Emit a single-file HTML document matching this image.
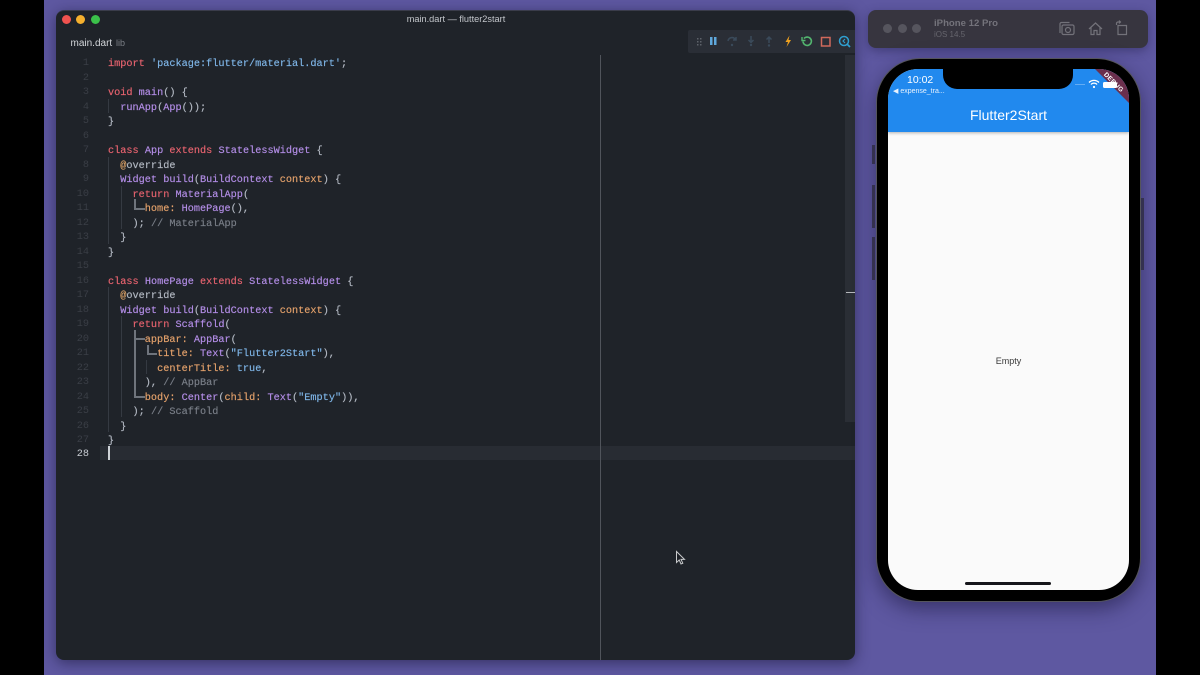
<!DOCTYPE html>
<html><head><meta charset="utf-8"><style>
*{box-sizing:border-box}
html,body{margin:0;padding:0;width:1200px;height:675px;overflow:hidden;background:#000}
body{position:relative;font-family:"Liberation Sans",sans-serif}
.abs{position:absolute}
#bg{left:44px;top:0;width:1112px;height:675px;background:#5e58a1}
#win{left:56px;top:10px;width:799px;height:650px;background:#1f2329;border-radius:8px;box-shadow:0 3px 14px rgba(20,18,50,.55);overflow:hidden;border:1px solid #3a3c4a;border-width:1px 0 0 0}
.l{position:absolute;left:108px;margin-top:2px;white-space:pre;font:10.22px/14px "Liberation Mono",monospace;color:#b4bac4;height:14px;-webkit-text-stroke:.15px currentColor}
.n{position:absolute;left:56px;margin-top:2px;width:33px;text-align:right;font:10.2px/14px "Liberation Mono",monospace;color:#3a3e46;height:14px}
.k{color:#e8636f}.f{color:#b48ee8}.s{color:#7fb6e8}.c{color:#7a7f88}.o{color:#e5a26b}.y{color:#d9a066}
.g{position:absolute;margin-top:2px;background:#353a42;width:1px}
.w{position:absolute;background:#6f747c}
</style></head><body>
<div class="abs" id="bg"></div>
<div class="abs" id="win"></div>
<div class="abs" style="left:62px;top:15px;width:9px;height:9px;border-radius:50%;background:#f0524f"></div>
<div class="abs" style="left:76px;top:15px;width:9px;height:9px;border-radius:50%;background:#f5b02e"></div>
<div class="abs" style="left:91px;top:15px;width:9px;height:9px;border-radius:50%;background:#3bc14a"></div>
<div class="abs" style="left:56px;top:13px;width:800px;text-align:center;font-size:9.2px;line-height:13px;color:#c3c6cb">main.dart — flutter2start</div>
<div class="abs" style="left:70.5px;top:36.5px;font-size:10px;line-height:13px;color:#d3d6da">main.dart <span style="font-size:9px;color:#7b7f86;margin-left:1px">lib</span></div>

<!-- current line -->
<div class="abs" style="left:100px;top:446px;width:755px;height:14px;background:#282c33"></div>
<!-- scrollbar track / ruler -->
<div class="abs" style="left:845px;top:55px;width:10px;height:367px;background:#2a2e35"></div>
<div class="abs" style="left:846px;top:292px;width:9px;height:1px;background:#b4b6ba"></div>
<div class="abs" style="left:600px;top:55px;width:1px;height:605px;background:#50545b"></div>

<!-- toolbar -->
<div class="abs" style="left:688px;top:30px;width:167px;height:23px;background:#2a2e36;border-radius:2px 0 0 2px"></div>
<svg class="abs" style="left:688px;top:30px" width="168" height="23" viewBox="688 30 168 23" fill="none">
<g fill="#5d626a"><rect x="697" y="38" width="1.5" height="1.5"/><rect x="700" y="38" width="1.5" height="1.5"/><rect x="697" y="41" width="1.5" height="1.5"/><rect x="700" y="41" width="1.5" height="1.5"/><rect x="697" y="44" width="1.5" height="1.5"/><rect x="700" y="44" width="1.5" height="1.5"/></g>
<rect x="710" y="37" width="2.5" height="8" fill="#5fa8dc"/><rect x="714" y="37" width="2.5" height="8" fill="#5fa8dc"/>
<path d="M728 41a4 4 0 0 1 7-2l1 1M736 37v3h-3" stroke="#3a4a5a" stroke-width="1.5"/><circle cx="732" cy="45" r="1.2" fill="#3a4a5a"/>
<path d="M751 36v6M748.500 40l2.500 2.500 2.500-2.500" stroke="#3a4a5a" stroke-width="1.5"/><circle cx="751" cy="45" r="1.2" fill="#3a4a5a"/>
<path d="M769 43v-6M766.500 39.500l2.500-2.500 2.500 2.500" stroke="#3a4a5a" stroke-width="1.5"/><circle cx="769" cy="45.500" r="1.2" fill="#3a4a5a"/>
<path d="M789.500 35.500l-4 6.500h2.500l-1.500 5 4.500-7h-2.500z" fill="#f0a21e"/>
<path d="M804 38.500a4.200 4.200 0 1 1-1 3" stroke="#53b56f" stroke-width="1.600"/><path d="M802 37v3.500h3.500" stroke="#53b56f" stroke-width="1.400"/>
<rect x="821.500" y="37.500" width="8.500" height="8.500" stroke="#d0695b" stroke-width="1.500"/>
<circle cx="844" cy="41" r="4.500" stroke="#2f9fd0" stroke-width="1.500"/><path d="M847.500 44.500l2.500 2.500" stroke="#2f9fd0" stroke-width="1.700"/><path d="M845 39l-2 2 2 2" stroke="#2f9fd0" stroke-width="1.100"/>
</svg>

<!-- line numbers -->
<div class="n" style="top:55px">1</div><div class="n" style="top:70px">2</div><div class="n" style="top:84px">3</div><div class="n" style="top:99px">4</div><div class="n" style="top:113px">5</div><div class="n" style="top:128px">6</div><div class="n" style="top:142px">7</div><div class="n" style="top:157px">8</div><div class="n" style="top:171px">9</div><div class="n" style="top:186px">10</div><div class="n" style="top:200px">11</div><div class="n" style="top:215px">12</div><div class="n" style="top:229px">13</div><div class="n" style="top:244px">14</div><div class="n" style="top:258px">15</div><div class="n" style="top:273px">16</div><div class="n" style="top:287px">17</div><div class="n" style="top:302px">18</div><div class="n" style="top:316px">19</div><div class="n" style="top:331px">20</div><div class="n" style="top:345px">21</div><div class="n" style="top:360px">22</div><div class="n" style="top:374px">23</div><div class="n" style="top:389px">24</div><div class="n" style="top:403px">25</div><div class="n" style="top:418px">26</div><div class="n" style="top:432px">27</div><div class="n" style="top:446px;color:#c8ccd2">28</div>

<!-- indent guides -->
<div class="g" style="left:108px;top:97px;height:14px"></div>
<div class="g" style="left:108px;top:155px;height:87px"></div>
<div class="g" style="left:121px;top:184px;height:43px"></div>
<div class="g" style="left:108px;top:285px;height:145px"></div>
<div class="g" style="left:121px;top:314px;height:101px"></div>
<div class="g" style="left:146px;top:358px;height:14px"></div>
<!-- widget guides -->
<div class="w" style="left:134px;top:199px;width:1.500px;height:10px"></div>
<div class="w" style="left:134px;top:208px;width:11px;height:1.500px"></div>
<div class="w" style="left:134px;top:330px;width:2px;height:67px"></div>
<div class="w" style="left:134px;top:338px;width:11px;height:1.500px"></div>
<div class="w" style="left:134px;top:396px;width:11px;height:1.500px"></div>
<div class="w" style="left:147px;top:345px;width:1.500px;height:9px"></div>
<div class="w" style="left:147px;top:353px;width:10px;height:1.500px"></div>

<!-- code -->
<div class="l" style="top:55px"><span class="k">import</span> <span class="s">'package:flutter/material.dart'</span>;</div>
<div class="l" style="top:84px"><span class="k">void</span> <span class="f">main</span>() {</div>
<div class="l" style="top:99px">  <span class="f">runApp</span>(<span class="f">App</span>());</div>
<div class="l" style="top:113px">}</div>
<div class="l" style="top:142px"><span class="k">class</span> <span class="f">App</span> <span class="k">extends</span> <span class="f">StatelessWidget</span> {</div>
<div class="l" style="top:157px">  <span class="y">@</span>override</div>
<div class="l" style="top:171px">  <span class="f">Widget</span> <span class="f">build</span>(<span class="f">BuildContext</span> <span class="o">context</span>) {</div>
<div class="l" style="top:186px">    <span class="k">return</span> <span class="f">MaterialApp</span>(</div>
<div class="l" style="top:200px">      <span class="o">home:</span> <span class="f">HomePage</span>(),</div>
<div class="l" style="top:215px">    ); <span class="c">// MaterialApp</span></div>
<div class="l" style="top:229px">  }</div>
<div class="l" style="top:244px">}</div>
<div class="l" style="top:273px"><span class="k">class</span> <span class="f">HomePage</span> <span class="k">extends</span> <span class="f">StatelessWidget</span> {</div>
<div class="l" style="top:287px">  <span class="y">@</span>override</div>
<div class="l" style="top:302px">  <span class="f">Widget</span> <span class="f">build</span>(<span class="f">BuildContext</span> <span class="o">context</span>) {</div>
<div class="l" style="top:316px">    <span class="k">return</span> <span class="f">Scaffold</span>(</div>
<div class="l" style="top:331px">      <span class="o">appBar:</span> <span class="f">AppBar</span>(</div>
<div class="l" style="top:345px">        <span class="o">title:</span> <span class="f">Text</span>(<span class="s">"Flutter2Start"</span>),</div>
<div class="l" style="top:360px">        <span class="o">centerTitle:</span> <span class="s">true</span>,</div>
<div class="l" style="top:374px">      ), <span class="c">// AppBar</span></div>
<div class="l" style="top:389px">      <span class="o">body:</span> <span class="f">Center</span>(<span class="o">child:</span> <span class="f">Text</span>(<span class="s">"Empty"</span>)),</div>
<div class="l" style="top:403px">    ); <span class="c">// Scaffold</span></div>
<div class="l" style="top:418px">  }</div>
<div class="l" style="top:432px">}</div>
<div class="abs" style="left:108px;top:446px;width:1.500px;height:14px;background:#cfd3d8"></div>

<!-- mouse cursor -->
<svg class="abs" style="left:672px;top:548px" width="16" height="20" viewBox="0 0 16 20"><path d="M4.500 3.500v11l2.700-2.500 1.800 4 1.800-.8-1.800-3.800h3.500z" fill="#1d2026" stroke="#c8cacc" stroke-width="1"/></svg>

<!-- simulator title bar -->
<div class="abs" style="left:868px;top:10px;width:280px;height:38px;background:#37353f;border-radius:8px;box-shadow:0 3px 10px rgba(30,28,70,.45)"></div>
<div class="abs" style="left:883px;top:24px;width:9px;height:9px;border-radius:50%;background:#56555e"></div>
<div class="abs" style="left:898px;top:24px;width:9px;height:9px;border-radius:50%;background:#56555e"></div>
<div class="abs" style="left:912px;top:24px;width:9px;height:9px;border-radius:50%;background:#56555e"></div>
<div class="abs" style="left:934px;top:17px;font-size:9.600px;line-height:13px;font-weight:bold;color:#74737b">iPhone 12 Pro</div>
<div class="abs" style="left:934px;top:29px;font-size:8px;line-height:11px;color:#66656d">iOS 14.5</div>
<svg class="abs" style="left:1055px;top:18px" width="80" height="22" viewBox="1055 18 80 22" fill="none" stroke="#73727a" stroke-width="1.200">
<path d="M1060 33v-9a1.500 1.500 0 0 1 1.500-1.500h8"/><rect x="1062" y="25" width="12" height="9.500" rx="1.500"/><circle cx="1068" cy="30" r="2.500"/>
<path d="M1089 29l6.500-6 6.500 6M1091 27.500v7h3v-4h3v4h3v-7"/>
<path d="M1118 25.500h8.500v9h-8.500zM1116.500 25v-1.500a1.500 1.500 0 0 1 1.500-1.500h2M1119 20.500l1.500 1.500-1.500 1.500"/>
</svg>

<!-- phone -->
<div class="abs" style="left:876px;top:58px;width:265px;height:544px;background:#000;border-radius:44px;border:1.500px solid #55555c;box-shadow:0 7px 20px rgba(25,22,60,.55)"></div>
<div class="abs" style="left:872px;top:145px;width:3px;height:19px;background:#34314f"></div>
<div class="abs" style="left:872px;top:185px;width:3px;height:43px;background:#34314f"></div>
<div class="abs" style="left:872px;top:237px;width:3px;height:43px;background:#34314f"></div>
<div class="abs" style="left:1141px;top:198px;width:3px;height:72px;background:#34314f"></div>
<div class="abs" style="left:888px;top:69px;width:241px;height:521px;background:#fafafa;border-radius:30px;overflow:hidden">
  <div class="abs" style="left:0;top:0;width:241px;height:63px;background:#2189ee;box-shadow:0 1px 3px rgba(0,0,0,.3)"></div>
  <svg class="abs" style="left:175px;top:0" width="66" height="66" viewBox="0 0 66 66"><path d="M32 0H49L66 17V34z" fill="#6b2f4d"/></svg>
  <svg class="abs" style="left:200px;top:10px" width="12" height="10" viewBox="0 0 12 10" fill="none" stroke="#fff" stroke-width="1.300"><path d="M1 3.500a7 7 0 0 1 10 0M3 5.500a4 4 0 0 1 6 0"/><circle cx="6" cy="8" r="1.100" fill="#fff" stroke="none"/></svg>
  <div class="abs" style="left:215px;top:13px;width:14px;height:6px;background:#fff;border-radius:1.500px"></div>
  <div class="abs" style="left:187px;top:15px;width:10px;height:1px;background:rgba(255,255,255,.3)"></div>
  <div class="abs" style="left:208px;top:10px;width:34px;font-size:6.500px;line-height:8px;font-weight:bold;color:#fff;text-align:center;transform:rotate(45deg);letter-spacing:.3px">DEBUG</div>
  <div class="abs" style="left:19px;top:5px;font-size:10.500px;line-height:13px;font-weight:500;color:#fff">10:02</div>
  <div class="abs" style="left:5px;top:18px;font-size:7px;line-height:9px;color:#e8f2fd">◀ expense_tra...</div>
  <div class="abs" style="left:0;top:36px;width:241px;text-align:center;font-size:14px;line-height:20px;color:#fff">Flutter2Start</div>
  <div class="abs" style="left:0;top:285px;width:241px;text-align:center;font-size:9px;line-height:14px;color:#3a3a3a">Empty</div>
  <div class="abs" style="left:77px;top:513px;width:86px;height:3px;background:#15151a;border-radius:2px"></div>
</div>
<!-- notch -->
<div class="abs" style="left:943px;top:66px;width:130px;height:23px;background:#000;border-radius:0 0 14px 14px"></div>
</body></html>
